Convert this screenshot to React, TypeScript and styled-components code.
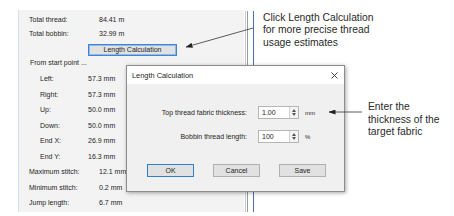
import React from 'react';
import styled, { createGlobalStyle } from 'styled-components';

const GlobalStyle = createGlobalStyle`
  html, body { margin: 0; padding: 0; background: #ffffff; }
  body { font-family: "Liberation Sans", Arial, sans-serif; }
`;

const Page = styled.div`
  position: relative;
  width: 454px;
  height: 216px;
  overflow: hidden;
  display: flex;
  align-items: flex-start;
  background: #ffffff;
`;

const Panel = styled.section`
  margin: 10px 0 0 18px;
  width: 226px;
  height: 202px;
  box-sizing: border-box;
  border-left: 1px solid #d3e0f0;
  background: #f3f3f3;
  padding-top: 2px;
  display: flex;
  flex-direction: column;
  font-size: 7px;
  color: #1e1e1e;
`;

const Divider = styled.div`
  margin-top: 11px;
  height: 201px;
  display: flex;
  gap: 1px;
  padding-left: 1px;
  & > span { width: 1px; height: 100%; background: #c8c8c8; }
  & > span:nth-child(2) { background: #9a9a9a; }
  & > span:nth-child(3) { margin-left: 4px; background: #4d6fae; }
`;

const Row = styled.div<{ $indent: number; $labelWidth: number; $height: number }>`
  height: ${(p) => p.$height}px;
  display: flex;
  align-items: center;
  padding-left: ${(p) => p.$indent}px;
  white-space: nowrap;
  & > span:first-child { width: ${(p) => p.$labelWidth}px; flex: none; }
`;

const ButtonRow = styled.div`
  height: 15px;
  padding-left: 69px;
`;

const PanelButton = styled.button`
  margin-top: 4px;
  width: 89px;
  height: 12px;
  box-sizing: border-box;
  border: 1px solid #3d86d6;
  box-shadow: inset 0 0 0 1px #8fbbe8;
  background: #e1e1e1;
  font-family: "Liberation Sans", Arial, sans-serif;
  font-size: 7px;
  color: #1e1e1e;
  padding: 0;
  line-height: 10px;
`;

const Spacer = styled.div<{ $h: number }>`
  height: ${(p) => p.$h}px;
`;

const Notes = styled.div`
  display: flex;
  flex-direction: column;
  padding-left: 9px;
  font-family: "Liberation Sans", Arial, sans-serif;
  font-size: 10.3px;
  line-height: 12.4px;
  color: #2a2a2a;
`;

const Note = styled.p<{ $top: number; $left: number }>`
  margin: ${(p) => p.$top}px 0 0 ${(p) => p.$left}px;
`;

const Dialog = styled.div`
  position: absolute;
  left: 126px;
  top: 65px;
  width: 219px;
  height: 127px;
  box-sizing: border-box;
  border: 1px solid #8c8c8c;
  background: #f0f0f0;
  box-shadow: 1px 1px 4px rgba(0, 0, 0, 0.35);
  display: flex;
  flex-direction: column;
  font-size: 7px;
  color: #1e1e1e;
`;

const TitleBar = styled.div`
  height: 18px;
  background: #ffffff;
  display: flex;
  align-items: center;
  justify-content: space-between;
  padding: 0 6px 0 5px;
  font-size: 7.4px;
`;

const CloseIcon = styled.svg`
  width: 7px;
  height: 7px;
`;

const Body = styled.div`
  display: flex;
  flex-direction: column;
  padding-top: 22px;
`;

const FieldRow = styled.div<{ $gapTop: number }>`
  margin-top: ${(p) => p.$gapTop}px;
  display: grid;
  grid-template-columns: 120px 41px auto;
  column-gap: 11px;
  align-items: center;
  height: 13px;
  & > label { text-align: right; }
`;

const SpinBox = styled.div`
  display: flex;
  height: 13px;
  box-sizing: border-box;
  border: 1px solid #b5b5b5;
  background: #ffffff;
`;

const SpinValue = styled.span`
  flex: 1;
  padding-left: 3px;
  line-height: 11px;
`;

const SpinArrows = styled.div`
  width: 8px;
  border-left: 1px solid #d0d0d0;
  background: #f4f4f4;
  display: flex;
  flex-direction: column;
  align-items: center;
  justify-content: center;
  gap: 1px;
`;

const Unit = styled.span`
  margin-left: -5px;
  font-size: 6px;
`;

const Buttons = styled.div`
  margin-top: 21px;
  display: flex;
  gap: 19px;
  padding-left: 20px;
`;

const DialogButton = styled.button<{ $default?: boolean }>`
  width: 47px;
  height: 13px;
  box-sizing: border-box;
  border: 1px solid ${(p) => (p.$default ? '#2f7fd4' : '#b0b0b0')};
  background: #e1e1e1;
  font-family: "Liberation Sans", Arial, sans-serif;
  font-size: 7px;
  color: #1e1e1e;
  padding: 0;
  line-height: 11px;
`;

const Arrows = styled.svg`
  position: absolute;
  left: 0;
  top: 0;
  width: 454px;
  height: 216px;
  pointer-events: none;
`;

const topStats = [
  ['Total thread:', '84.41 m'],
  ['Total bobbin:', '32.99 m'],
];

const startStats = [
  ['Left:', '57.3 mm'],
  ['Right:', '57.3 mm'],
  ['Up:', '50.0 mm'],
  ['Down:', '50.0 mm'],
  ['End X:', '26.9 mm'],
  ['End Y:', '16.3 mm'],
];

const stitchStats = [
  ['Maximum stitch:', '12.1 mm'],
  ['Minimum stitch:', '0.2 mm'],
  ['Jump length:', '6.7 mm'],
];

function Spin() {
  return (
    <SpinArrows>
      <svg width="4" height="3" viewBox="0 0 4 3"><path d="M0 3 L2 0 L4 3 Z" fill="#555" /></svg>
      <svg width="4" height="3" viewBox="0 0 4 3"><path d="M0 0 L2 3 L4 0 Z" fill="#555" /></svg>
    </SpinArrows>
  );
}

export default function App() {
  return (
    <Page>
      <GlobalStyle />
      <Panel>
        {topStats.map(([l, v]) => (
          <Row key={l} $indent={10} $labelWidth={70} $height={14}>
            <span>{l}</span>
            <span>{v}</span>
          </Row>
        ))}
        <ButtonRow>
          <PanelButton>Length Calculation</PanelButton>
        </ButtonRow>
        <Row $indent={11} $labelWidth={70} $height={14}>
          <span>From start point ...</span>
        </Row>
        <Spacer $h={2} />
        {startStats.map(([l, v]) => (
          <Row key={l} $indent={21} $labelWidth={48} $height={15.5}>
            <span>{l}</span>
            <span>{v}</span>
          </Row>
        ))}
        {stitchStats.map(([l, v]) => (
          <Row key={l} $indent={10} $labelWidth={70} $height={15.5}>
            <span>{l}</span>
            <span>{v}</span>
          </Row>
        ))}
      </Panel>
      <Divider>
        <span />
        <span />
        <span />
      </Divider>
      <Notes>
        <Note $top={12} $left={0}>
          Click Length Calculation
          <br />
          for more precise thread
          <br />
          usage estimates
        </Note>
        <Note $top={52} $left={105}>
          Enter the
          <br />
          thickness of the
          <br />
          target fabric
        </Note>
      </Notes>

      <Dialog>
        <TitleBar>
          <span>Length Calculation</span>
          <CloseIcon viewBox="0 0 7 7">
            <path d="M0.5 0.5 L6.5 6.5 M6.5 0.5 L0.5 6.5" stroke="#333" strokeWidth="0.9" />
          </CloseIcon>
        </TitleBar>
        <Body>
          <FieldRow $gapTop={0}>
            <label>Top thread fabric thickness:</label>
            <SpinBox>
              <SpinValue>1.00</SpinValue>
              <Spin />
            </SpinBox>
            <Unit>mm</Unit>
          </FieldRow>
          <FieldRow $gapTop={11}>
            <label>Bobbin thread length:</label>
            <SpinBox>
              <SpinValue>100</SpinValue>
              <Spin />
            </SpinBox>
            <Unit>%</Unit>
          </FieldRow>
          <Buttons>
            <DialogButton $default>OK</DialogButton>
            <DialogButton>Cancel</DialogButton>
            <DialogButton>Save</DialogButton>
          </Buttons>
        </Body>
      </Dialog>

      <Arrows viewBox="0 0 454 216">
        <defs>
          <marker id="head" markerWidth="7" markerHeight="5" refX="6.5" refY="2.5" orient="auto" markerUnits="userSpaceOnUse">
            <path d="M0 0 L7 2.5 L0 5 Z" fill="#222" />
          </marker>
        </defs>
        <line x1="253" y1="28" x2="186" y2="47" stroke="#333" strokeWidth="0.8" markerEnd="url(#head)" />
        <line x1="362" y1="112" x2="329" y2="112" stroke="#333" strokeWidth="0.8" markerEnd="url(#head)" />
      </Arrows>
    </Page>
  );
}
